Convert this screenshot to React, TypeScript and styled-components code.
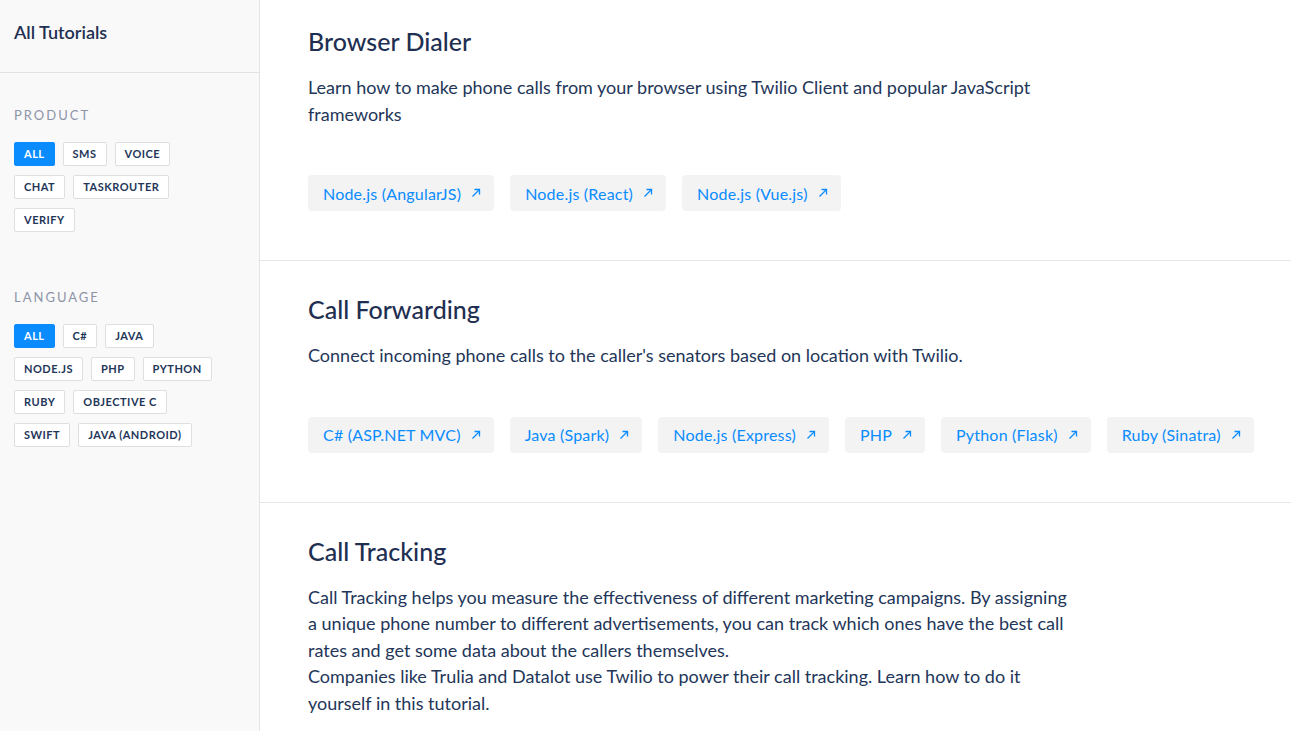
import React from "react";
import styled, { createGlobalStyle } from "styled-components";

const Global = createGlobalStyle`
  html, body { margin: 0; padding: 0; height: 100%; overflow: hidden; }
  body { font-family: Lato, "Open Sans", sans-serif; color: #233659; background: #fff; }
  * { box-sizing: border-box; }
`;

const Page = styled.div`
  display: flex;
  height: 100vh;
`;

const Sidebar = styled.aside`
  width: 260px;
  flex: none;
  background: #f9f9f9;
  border-right: 1px solid #e4e4e4;
`;

const SideHeader = styled.div`
  height: 73px;
  padding: 20px 14px 0;
  border-bottom: 1px solid #e2e2e2;
  font-size: 18px;
  font-weight: 600;
  color: #1f2f52;
  line-height: 24px;
`;

const FilterGroup = styled.div`
  padding: 34px 14px 0;
  & + & { padding-top: 57px; }
`;

const GroupLabel = styled.div`
  font-size: 13px;
  letter-spacing: 2px;
  color: #8d94a8;
  line-height: 16px;
  margin-bottom: 19px;
`;

const Chips = styled.div`
  display: flex;
  flex-wrap: wrap;
  gap: 9px 8px;
  max-width: 215px;
`;

const Chip = styled.button<{ $active?: boolean }>`
  height: 24px;
  padding: 0 9px;
  border-radius: 2px;
  border: 1px solid ${(p) => (p.$active ? "#0a8cff" : "#dfdfdf")};
  background: ${(p) => (p.$active ? "#0a8cff" : "#fff")};
  color: ${(p) => (p.$active ? "#fff" : "#233659")};
  font-family: Lato, sans-serif;
  font-size: 11px;
  font-weight: 700;
  letter-spacing: 0.5px;
  line-height: 22px;
  cursor: pointer;
`;

const Main = styled.main`
  flex: 1;
  min-width: 0;
  overflow: hidden;
`;

const Section = styled.section<{ $first?: boolean }>`
  padding: ${(p) => (p.$first ? "25px" : "32px")} 20px 49px 48px;
  border-bottom: 1px solid #e6e6e6;
`;

const Title = styled.h2`
  margin: 0 0 17px;
  font-size: 25px;
  font-weight: 500;
  line-height: 32px;
  color: #1f2f52;
`;

const Desc = styled.p`
  margin: 0;
  max-width: 765px;
  font-size: 18px;
  line-height: 26.5px;
  color: #233659;
`;

const Links = styled.div`
  display: flex;
  flex-wrap: wrap;
  gap: 16px;
  margin-top: 48px;
`;

const LinkButton = styled.a`
  display: inline-flex;
  align-items: center;
  gap: 10px;
  height: 36px;
  padding: 0 13px 0 15px;
  border-radius: 4px;
  background: #f3f3f3;
  color: #0a8cff;
  font-size: 16px;
  letter-spacing: 0.2px;
  text-decoration: none;
`;

const Arrow = () => (
  <svg width="10" height="10" viewBox="0 0 10 10" fill="none" stroke="#0a8cff" strokeWidth="1.3">
    <path d="M1.5 8.5 L8.5 1.5" />
    <path d="M3.5 1.5 H8.5 V6.5" />
  </svg>
);

const sections = [
  {
    title: "Browser Dialer",
    desc: ["Learn how to make phone calls from your browser using Twilio Client and popular JavaScript frameworks"],
    links: ["Node.js (AngularJS)", "Node.js (React)", "Node.js (Vue.js)"],
  },
  {
    title: "Call Forwarding",
    desc: ["Connect incoming phone calls to the caller's senators based on location with Twilio."],
    links: ["C# (ASP.NET MVC)", "Java (Spark)", "Node.js (Express)", "PHP", "Python (Flask)", "Ruby (Sinatra)"],
  },
  {
    title: "Call Tracking",
    desc: [
      "Call Tracking helps you measure the effectiveness of different marketing campaigns. By assigning a unique phone number to different advertisements, you can track which ones have the best call rates and get some data about the callers themselves.",
      "Companies like Trulia and Datalot use Twilio to power their call tracking. Learn how to do it yourself in this tutorial.",
    ],
    links: ["C# (ASP.NET MVC)", "Java (Spark)", "Node.js (Express)", "PHP", "Python (Flask)", "Ruby (Sinatra)"],
  },
];

const products = ["ALL", "SMS", "VOICE", "CHAT", "TASKROUTER", "VERIFY"];
const languages = ["ALL", "C#", "JAVA", "NODE.JS", "PHP", "PYTHON", "RUBY", "OBJECTIVE C", "SWIFT", "JAVA (ANDROID)"];

export default function App() {
  return (
    <>
      <Global />
      <Page>
        <Sidebar>
          <SideHeader>All Tutorials</SideHeader>
          <FilterGroup>
            <GroupLabel>PRODUCT</GroupLabel>
            <Chips>
              {products.map((p, i) => (
                <Chip key={p} $active={i === 0}>{p}</Chip>
              ))}
            </Chips>
          </FilterGroup>
          <FilterGroup>
            <GroupLabel>LANGUAGE</GroupLabel>
            <Chips>
              {languages.map((p, i) => (
                <Chip key={p} $active={i === 0}>{p}</Chip>
              ))}
            </Chips>
          </FilterGroup>
        </Sidebar>
        <Main>
          {sections.map((s, i) => (
            <Section key={s.title} $first={i === 0}>
              <Title>{s.title}</Title>
              {s.desc.map((d) => (
                <Desc key={d}>{d}</Desc>
              ))}
              <Links>
                {s.links.map((l) => (
                  <LinkButton key={l} href="#">
                    {l}
                    <Arrow />
                  </LinkButton>
                ))}
              </Links>
            </Section>
          ))}
        </Main>
      </Page>
    </>
  );
}
